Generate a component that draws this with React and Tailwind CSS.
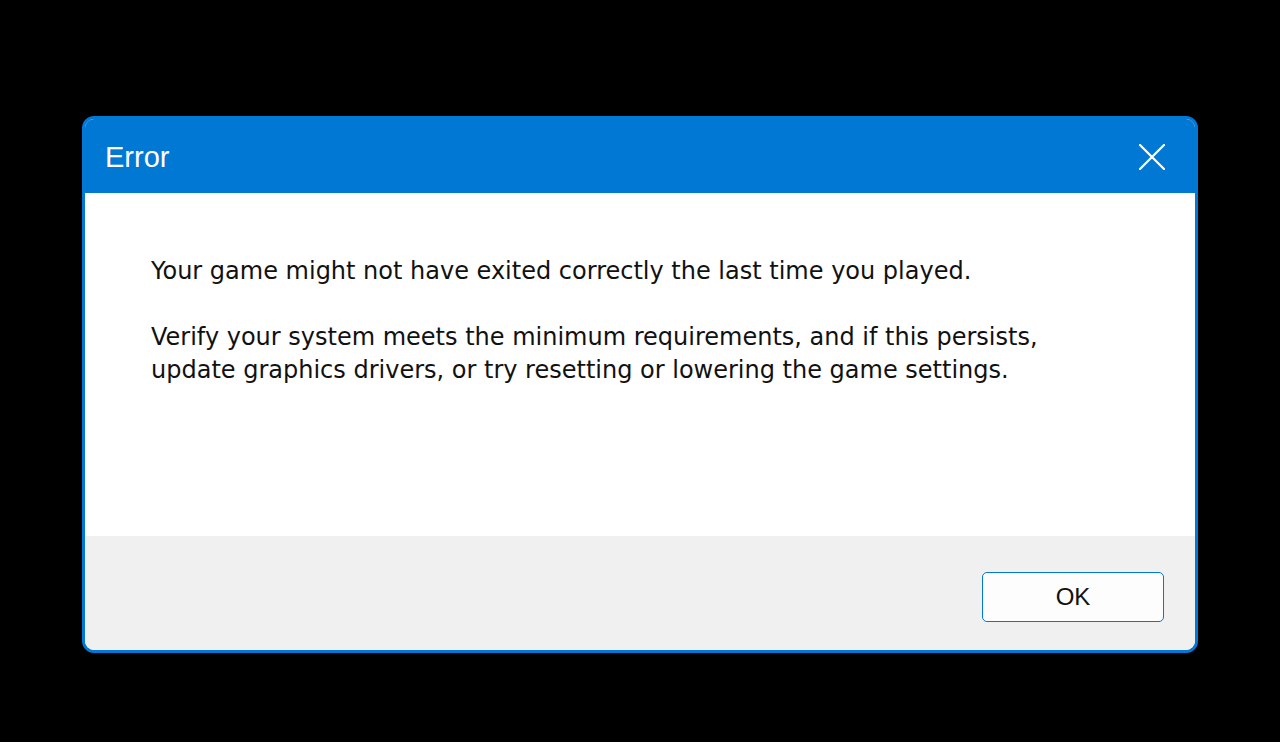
export default function App() {
  return (
    <div className="w-[1280px] h-[742px] bg-black flex items-start justify-center pt-[116px] font-['Liberation_Sans',sans-serif]">
      <div className="w-[1116px] h-[537px] border-[3px] border-[#0078d4] rounded-[12px] overflow-hidden flex flex-col bg-white">
        {/* Title bar */}
        <div className="h-[74px] bg-[#0078d4] flex items-center justify-between pl-[20px] pr-[30px] shrink-0">
          <span className="text-white text-[29px] leading-none mt-[2px]">Error</span>
          <svg width="26" height="26" viewBox="0 0 26 26" className="mt-[2px]">
            <path d="M1 1 L25 25 M25 1 L1 25" stroke="white" strokeWidth="2.2" strokeLinecap="round" />
          </svg>
        </div>

        {/* Message */}
        <div className="flex-1 bg-white pl-[66px] pt-[62px] text-[24px] leading-[33px] text-[#111] font-['DejaVu_Sans',sans-serif]">
          <p>Your game might not have exited correctly the last time you played.</p>
          <p className="mt-[33px]">
            Verify your system meets the minimum requirements, and if this persists,
            <br />
            update graphics drivers, or try resetting or lowering the game settings.
          </p>
        </div>

        {/* Footer */}
        <div className="h-[114px] bg-[#f0f0f0] flex items-start justify-end pr-[31px] pt-[36px] shrink-0">
          <button className="w-[182px] h-[50px] border border-[#0078d4] rounded-[5px] bg-[#fdfdfd] text-[24px] text-[#111]">
            OK
          </button>
        </div>
      </div>
    </div>
  );
}
